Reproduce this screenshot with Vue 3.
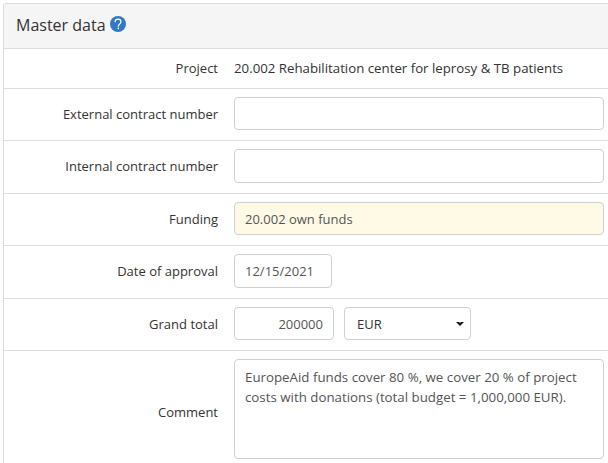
<script setup>
const rows = [
  { label: 'External contract number', value: '' },
  { label: 'Internal contract number', value: '' },
]
</script>

<template>
  <div class="page">
    <section class="card">
      <header class="head">
        <h2 class="title">Master data</h2>
        <svg class="help" width="16" height="16" viewBox="0 0 16 16" aria-hidden="true">
          <circle cx="8" cy="8" r="8" fill="#3278c4" />
          <path d="M5 6.1C5.1 4.3 6.3 3.2 8 3.2c1.7 0 3 1.1 3 2.6 0 1.2-.7 1.9-1.5 2.5-.8.6-1.2 1-1.2 1.9v.5" fill="none" stroke="#fff" stroke-width="1.2" />
          <rect x="7.6" y="11.6" width="1.4" height="1.5" fill="#fff" />
        </svg>
      </header>
      <div class="row row-static">
        <div class="label">Project</div>
        <div class="field static">20.002 Rehabilitation center for leprosy &amp; TB patients</div>
      </div>
      <div v-for="r in rows" :key="r.label" class="row">
        <div class="label">{{ r.label }}</div>
        <div class="field"><input class="ctl wide" type="text" :value="r.value" /></div>
      </div>
      <div class="row">
        <div class="label">Funding</div>
        <div class="field"><input class="ctl wide ro" type="text" value="20.002 own funds" readonly /></div>
      </div>
      <div class="row">
        <div class="label">Date of approval</div>
        <div class="field"><input class="ctl date" type="text" value="12/15/2021" /></div>
      </div>
      <div class="row">
        <div class="label">Grand total</div>
        <div class="field inline">
          <input class="ctl total" type="text" value="200000" />
          <div class="select-wrap">
            <select class="ctl cur"><option>EUR</option></select>
            <svg class="caret" width="8" height="4" viewBox="0 0 8 4" aria-hidden="true">
              <path d="M0 0h3l1 1 1-1h3L4 4z" fill="#111" />
            </svg>
          </div>
        </div>
      </div>
      <div class="row row-last">
        <div class="label">Comment</div>
        <div class="field field-last">
          <textarea class="ctl wide area">EuropeAid funds cover 80 %, we cover 20 % of project costs with donations (total budget = 1,000,000 EUR).</textarea>
        </div>
      </div>
    </section>
  </div>
</template>

<style>
html, body { margin: 0; background: #fff; overflow: hidden; }
</style>

<style scoped>
.page {
  height: 463px;
  padding: 3px 0 0 3px;
  box-sizing: border-box;
  overflow: hidden;
  font-family: "Open Sans", "Noto Sans", sans-serif;
  font-size: 13px;
  color: #333;
}
.card {
  border-left: 1px solid #ddd;
  border-top: 1px solid #ddd;
  border-top-left-radius: 3px;
}
.head {
  height: 43.75px;
  background: #f5f5f5;
  display: flex;
  align-items: center;
  gap: 4px;
  padding-left: 12px;
  border-bottom: 1px solid #ddd;
}
.title {
  margin: 0 0 2px;
  font-size: 16px;
  font-weight: 400;
  color: #333;
}
.help { flex: none; margin-bottom: 3px; }
.row {
  display: flex;
  align-items: center;
  padding: 8px 0 10px;
  border-bottom: 1px solid #ddd;
}
.row-static {
  height: 40px;
  padding: 0 0 1px;
  box-sizing: border-box;
}
.row-last { padding: 0; }
.field-last { padding: 8px 0 14px; }
.label {
  width: 214px;
  flex: none;
  text-align: right;
}
.field {
  margin-left: 16px;
  flex: none;
}
.static { font-size: 13.25px; }
.inline {
  display: flex;
  gap: 10px;
}
.ctl {
  display: block;
  box-sizing: border-box;
  height: 33.5px;
  margin: 0;
  padding: 6px 10px;
  border: 1px solid #ccd0d8;
  border-radius: 4px;
  background: #fff;
  font: inherit;
  color: #555;
  outline: none;
}
.wide { width: 370px; }
.ro { background: #fffae5; }
.date { width: 98px; }
.total { width: 100px; text-align: right; }
.select-wrap { position: relative; }
.cur {
  width: 127px;
  color: #333;
  padding-left: 12px;
  appearance: none;
}
.caret {
  position: absolute;
  left: 112px;
  top: 15px;
  pointer-events: none;
}
.area {
  height: 100px;
  padding-top: 7px;
  font-size: 13.3px;
  line-height: 20px;
  resize: none;
  overflow: hidden;
}
</style>
